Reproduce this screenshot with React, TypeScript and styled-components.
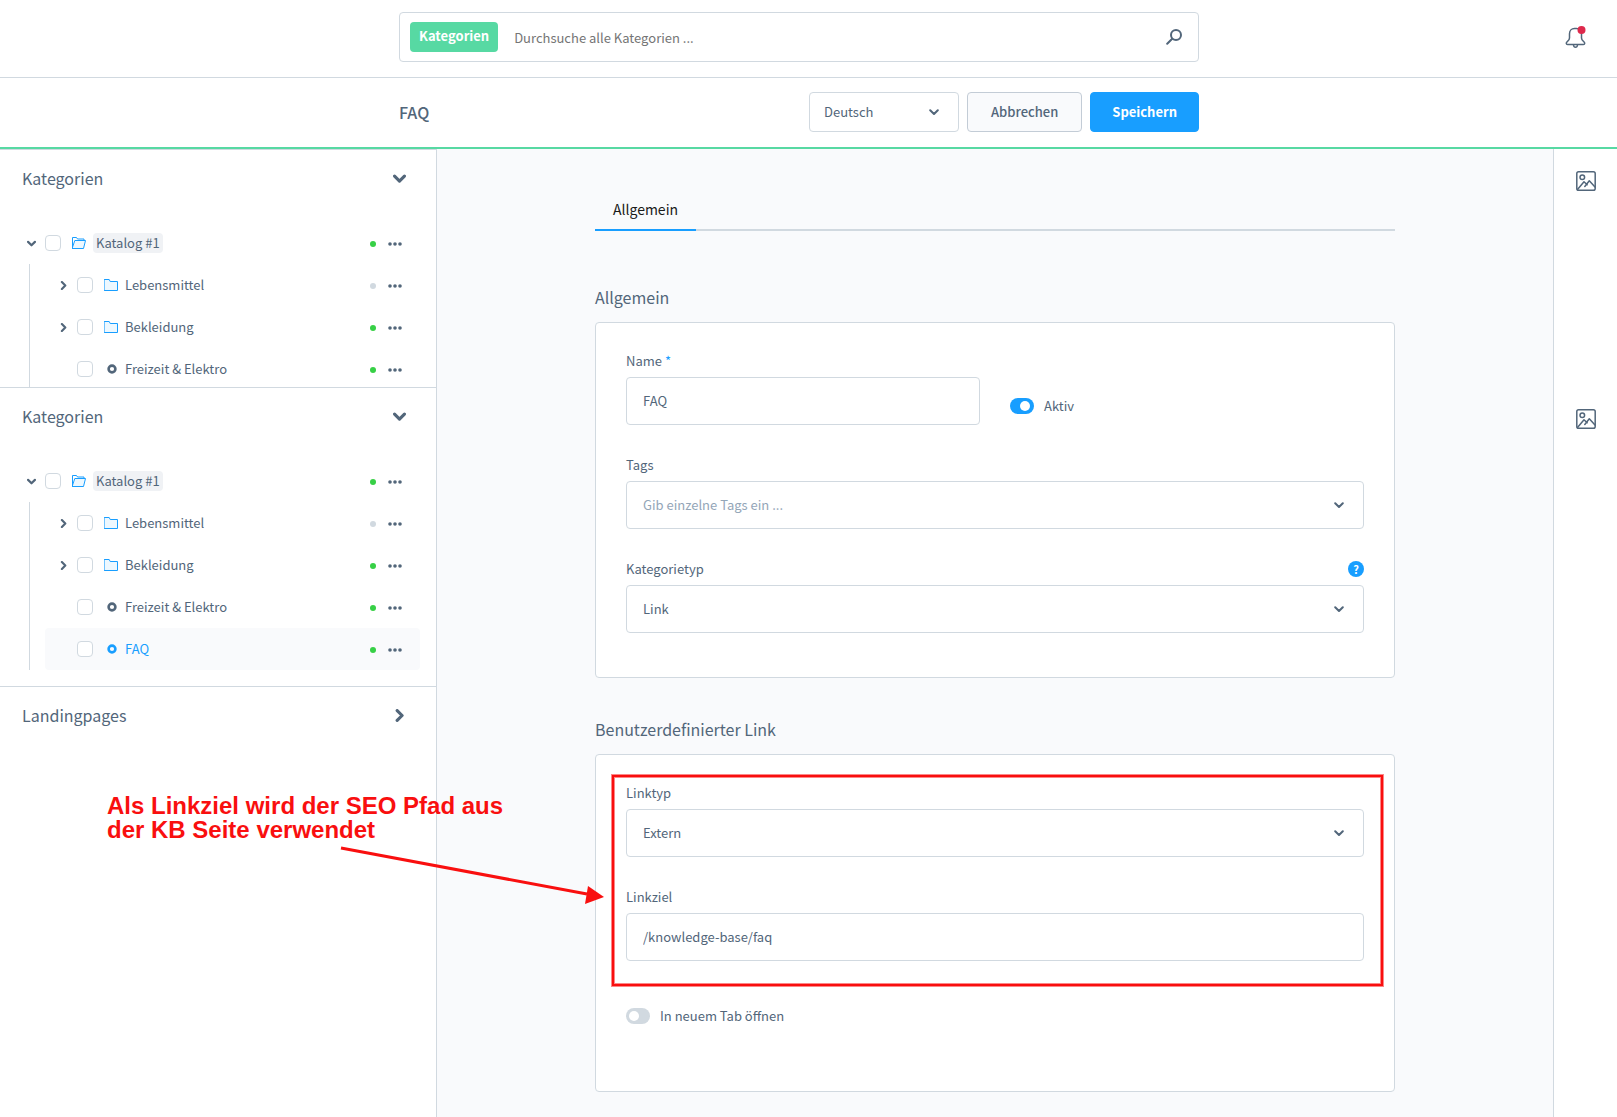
import React, { useId, useState } from "react";
import styled, { createGlobalStyle } from "styled-components";

const color = {
  text: "#52667a",
  line: "#d1d9e0",
  canvas: "#f9fafc",
  blue: "#189eff",
  green: "#57d9a3",
  active: "#37d046",
  alert: "#de294c",
  mark: "#f90f0f",
};

const GlobalStyle = createGlobalStyle`
  *, *::before, *::after { box-sizing: border-box; }
  body {
    margin: 0;
    background: #fff;
    color: ${color.text};
    font-family: "Noto Sans CJK SC", "Noto Sans", sans-serif;
    font-size: 13px;
    line-height: 16px;
  }
  button, input, select { font: inherit; color: inherit; }
  button { cursor: pointer; }
`;

/* ---------- Icons ---------- */

const Svg = styled.svg`
  display: block;
  flex: none;
  fill: none;
  stroke: currentColor;
  stroke-linecap: round;
  stroke-linejoin: round;
`;

type ChevronProps = { direction?: "down" | "right"; size?: number; weight?: number };

const Chevron = ({ direction = "down", size = 10, weight = 2 }: ChevronProps) => (
  <Svg width={size} height={size} viewBox="0 0 10 10" strokeWidth={weight} aria-hidden="true">
    <path d={direction === "down" ? "M1.2 3.2 5 7l3.8-3.8" : "M3.2 1.2 7 5 3.2 8.8"} />
  </Svg>
);

const SearchIcon = () => (
  <Svg width="16" height="16" viewBox="0 0 16 16" strokeWidth="2" aria-hidden="true">
    <circle cx="10" cy="6" r="5" />
    <path d="M6.2 9.8 1.2 14.8" />
  </Svg>
);

const BellIcon = () => (
  <Svg width="22" height="24" viewBox="0 0 22 24" strokeWidth="1.5" aria-hidden="true">
    <path d="M10.5 3.5h1c3 0 5 2.2 5 5.2v4.3c0 1.6.8 2.6 2.2 3.6 1.5 1.1 1.3 2.9-.3 2.9H2.600c-1.600 0-1.800-1.800-.3-2.900 1.400-1 2.200-2 2.200-3.600V8.700c0-3 2-5.200 5-5.200z" />
    <path d="M8.500 20c.2 1.700 1 2.200 2 2.200s1.800-.5 2-2.200" />
    <circle cx="16.500" cy="5" r="4" fill={color.alert} stroke="none" style={{ stroke: "none" }} />
  </Svg>
);

const PictureIcon = () => (
  <Svg width="20" height="20" viewBox="0 0 20 20" strokeWidth="1.5" aria-hidden="true">
    <rect x=".8" y=".8" width="18.4" height="18.4" rx="1.8" />
    <circle cx="6.3" cy="6.3" r="2.3" />
    <path d="M1.500 18.500 8 10.800l3.200 2.900M8.800 15.500l4.500-5.700 5.700 6.200" />
  </Svg>
);

const FolderIcon = () => (
  <Svg width="14" height="14" viewBox="0 0 14 14" color={color.blue} aria-hidden="true">
    <path fill="#edf8ff" strokeLinejoin="miter" d="M.5 1.500h4.700l1 2h7.300v9H.5z" />
  </Svg>
);

const OpenFolderIcon = () => (
  <Svg width="14" height="14" viewBox="0 0 14 14" color={color.blue} aria-hidden="true">
    <path strokeLinejoin="miter" d="M.5 12.500v-11h4l1 1.500h6.500v1.500" />
    <path fill="#edf8ff" strokeLinejoin="miter" d="M3.200 4.500h10.300l-2 8H.5z" />
  </Svg>
);

const RingIcon = () => (
  <Svg width="14" height="14" viewBox="0 0 14 14" strokeWidth="2.600" aria-hidden="true">
    <circle cx="8" cy="7" r="3.400" />
  </Svg>
);

const MoreIcon = () => (
  <Svg width="14" height="4" viewBox="0 0 14 4" aria-hidden="true">
    <g fill="currentColor" stroke="none">
      <circle cx="2" cy="2" r="1.800" />
      <circle cx="7" cy="2" r="1.800" />
      <circle cx="12" cy="2" r="1.800" />
    </g>
  </Svg>
);

/* ---------- Header and action bar ---------- */

const PlainButton = styled.button`
  display: flex;
  align-items: center;
  justify-content: center;
  padding: 0;
  border: 0;
  background: none;
`;

const TopGrid = styled.div`
  display: grid;
  grid-template-columns: minmax(0, 1fr) minmax(0, 800px) minmax(0, 1fr);
  align-items: center;
  padding-right: 19px;
`;

const Header = styled(TopGrid).attrs({ as: "header" })`
  height: 78px;
  padding-bottom: 3px;
  border-bottom: 1px solid ${color.line};
`;

const SearchBox = styled.form`
  grid-column: 2;
  display: flex;
  align-items: center;
  height: 50px;
  padding: 0 16px 0 10px;
  border: 1px solid ${color.line};
  border-radius: 4px;
`;

const SearchScope = styled.button`
  height: 30px;
  padding: 0 9px 2px;
  border: 0;
  border-radius: 4px;
  background: ${color.green};
  color: #fff;
  font-weight: 700;
`;

const SearchInput = styled.input`
  flex: 1;
  min-width: 0;
  padding: 2px 16px 0;
  border: 0;
  outline: 0;
  background: none;
  &::placeholder { color: #757575; opacity: 1; }
`;

const BellButton = styled(PlainButton)`
  justify-self: end;
  margin-right: 11px;
`;

const ActionBar = styled(TopGrid)`
  height: 71px;
  padding-bottom: 1px;
  border-bottom: 2px solid ${color.green};
`;

const ActionContent = styled.div`
  grid-column: 2;
  display: flex;
  align-items: center;
  gap: 8px;
`;

const PageTitle = styled.h1`
  flex: 1;
  margin: 0;
  font-size: 16px;
  line-height: 24px;
  font-weight: 500;
`;

const Button = styled.button<{ $primary?: boolean }>`
  height: 40px;
  padding: 0 ${(p) => (p.$primary ? "21px" : "23px")};
  border: 1px solid ${(p) => (p.$primary ? color.blue : "#c3ccd6")};
  border-radius: 4px;
  background: ${(p) => (p.$primary ? color.blue : color.canvas)};
  color: ${(p) => (p.$primary ? "#fff" : color.text)};
  font-weight: ${(p) => (p.$primary ? 700 : 500)};
`;

/* ---------- Form controls ---------- */

const Control = styled.div<{ $compact?: boolean }>`
  display: grid;
  align-items: center;
  width: ${(p) => (p.$compact ? "150px" : "100%")};
  height: ${(p) => (p.$compact ? "40px" : "48px")};

  > * { grid-area: 1 / 1; }
  > svg { justify-self: end; margin-right: 20px; pointer-events: none; }
  > input, > select {
    width: 100%;
    height: 100%;
    padding: 0 ${(p) => (p.$compact ? "14px" : "16px")};
    border: 1px solid ${color.line};
    border-radius: 4px;
    background: #fff;
    appearance: none;
    outline: 0;
  }
  > input { padding-bottom: 2px; }
  > input::placeholder { color: #94a6b8; opacity: 1; }
`;

const FieldBox = styled.div`
  display: flex;
  flex-direction: column;
  gap: 8px;
`;

const FieldHead = styled.div`
  display: flex;
  align-items: center;
  justify-content: space-between;
  height: 16px;
`;

const Required = styled.span`
  color: ${color.blue};
`;

const HelpButton = styled.button`
  width: 16px;
  height: 16px;
  padding: 0;
  border: 0;
  border-radius: 50%;
  background: ${color.blue};
  color: #fff;
  font-size: 11px;
  line-height: 16px;
  font-weight: 700;
`;

type FieldProps = {
  label: string;
  value?: string;
  placeholder?: string;
  required?: boolean;
  help?: boolean;
  options?: string[];
  dropdown?: boolean;
};

const Field = ({ label, value = "", placeholder, required, help, options, dropdown }: FieldProps) => {
  const id = useId();
  return (
    <FieldBox>
      <FieldHead>
        <label htmlFor={id}>
          {label}
          {required && <Required> *</Required>}
        </label>
        {help && <HelpButton type="button" aria-label="Hilfe">?</HelpButton>}
      </FieldHead>
      <Control>
        {options ? (
          <select id={id} defaultValue={value}>
            {options.map((option) => (
              <option key={option}>{option}</option>
            ))}
          </select>
        ) : (
          <input id={id} type="text" defaultValue={value} placeholder={placeholder} required={required} />
        )}
        {(options || dropdown) && <Chevron />}
      </Control>
    </FieldBox>
  );
};

const SwitchLabel = styled.label`
  display: flex;
  align-items: center;
  gap: 10px;
  padding: 15px 0 11px;
`;

const SwitchInput = styled.input`
  flex: none;
  display: flex;
  align-items: center;
  width: 24px;
  height: 16px;
  margin: 0;
  padding: 0 3px;
  border-radius: 8px;
  background: ${color.line};
  appearance: none;

  &::before {
    content: "";
    width: 10px;
    height: 10px;
    border-radius: 50%;
    background: #fff;
  }
  &:checked { justify-content: flex-end; padding-right: 4px; background: ${color.blue}; }
`;

const Switch = ({ label, on }: { label: string; on?: boolean }) => (
  <SwitchLabel>
    <SwitchInput type="checkbox" role="switch" defaultChecked={on} />
    {label}
  </SwitchLabel>
);

/* ---------- Category sidebar ---------- */

const Sidebar = styled.aside`
  border: solid ${color.line};
  border-width: 1px 1px 0 0;
`;

const Panel = styled.section`
  border-bottom: 1px solid ${color.line};
  &:last-child { border-bottom: 0; }
`;

const PanelToggle = styled.button`
  display: flex;
  align-items: center;
  justify-content: space-between;
  width: 100%;
  height: 60px;
  padding: 0 30px 4px 22px;
  border: 0;
  background: none;
`;

const PanelTitle = styled.span`
  font-size: 16px;
  line-height: 24px;
`;

const Tree = styled.div<{ $clipped?: boolean }>`
  max-height: ${(p) => (p.$clipped ? "177px" : "none")};
  overflow: hidden;
  padding: 12px 16px 16px 17px;
`;

const Branch = styled.ul`
  margin: 0 0 0 12px;
  padding: 0 0 0 15px;
  border-left: 1px solid ${color.line};
  list-style: none;
`;

const TreeRow = styled.div<{ $nested?: boolean; $selected?: boolean }>`
  display: flex;
  align-items: center;
  height: 42px;
  padding: 0 18px 0 ${(p) => (p.$nested ? "4px" : "0")};
  border-radius: 4px;
  background: ${(p) => (p.$selected ? color.canvas : "transparent")};
`;

const Expander = styled(PlainButton)`
  width: 28px;
  height: 28px;
`;

const ExpanderGap = styled.span`
  width: 28px;
`;

const Checkbox = styled.input`
  flex: none;
  width: 16px;
  height: 16px;
  margin: 0 11px 0 0;
  border: 1px solid ${color.line};
  border-radius: 4px;
  background: #fff;
  appearance: none;
  &:checked { border-color: ${color.blue}; background: ${color.blue}; }
`;

const NodeLink = styled.a<{ $root?: boolean; $selected?: boolean }>`
  display: flex;
  align-items: center;
  gap: 7px;
  color: ${(p) => (p.$selected ? color.blue : "inherit")};
  text-decoration: none;

  > span {
    padding: 0 ${(p) => (p.$root ? "3px" : "0")};
    border-radius: 4px;
    background: ${(p) => (p.$root ? "#f0f2f5" : "transparent")};
    line-height: 20px;
  }
`;

const RowEnd = styled.div`
  display: flex;
  align-items: center;
  gap: 12px;
  margin-left: auto;
  padding-top: 2px;
`;

const Status = styled.span<{ $on: boolean }>`
  width: 6px;
  height: 6px;
  border-radius: 50%;
  background: ${(p) => (p.$on ? color.active : color.line)};
`;

type Node = { name: string; kind: "root" | "folder" | "leaf"; active: boolean; selected?: boolean };

const TreeItem = ({ node }: { node: Node }) => {
  const root = node.kind === "root";
  return (
    <TreeRow $nested={!root} $selected={node.selected}>
      {node.kind === "leaf" ? (
        <ExpanderGap />
      ) : (
        <Expander type="button" aria-expanded={root} aria-label={node.name + " aufklappen"}>
          <Chevron direction={root ? "down" : "right"} size={9} weight={2.4} />
        </Expander>
      )}
      <Checkbox type="checkbox" aria-label={node.name} />
      <NodeLink href="#" $root={root} $selected={node.selected}>
        {root ? <OpenFolderIcon /> : node.kind === "folder" ? <FolderIcon /> : <RingIcon />}
        <span>{node.name}</span>
      </NodeLink>
      <RowEnd>
        <Status $on={node.active} />
        <PlainButton type="button" aria-label="Aktionen">
          <MoreIcon />
        </PlainButton>
      </RowEnd>
    </TreeRow>
  );
};

const rootNode: Node = { name: "Katalog #1", kind: "root", active: true };
const baseNodes: Node[] = [
  { name: "Lebensmittel", kind: "folder", active: false },
  { name: "Bekleidung", kind: "folder", active: true },
  { name: "Freizeit & Elektro", kind: "leaf", active: true },
];
const faqNode: Node = { name: "FAQ", kind: "leaf", active: true, selected: true };

type TreePanelProps = { title: string; nodes?: Node[]; clipped?: boolean };

const TreePanel = ({ title, nodes, clipped }: TreePanelProps) => {
  const [open, setOpen] = useState(Boolean(nodes));
  return (
    <Panel>
      <PanelToggle type="button" aria-expanded={open} onClick={() => setOpen(!open)}>
        <PanelTitle>{title}</PanelTitle>
        <Chevron direction={open ? "down" : "right"} size={13} weight={2.4} />
      </PanelToggle>
      {open && nodes && (
        <Tree $clipped={clipped}>
          <TreeItem node={rootNode} />
          <Branch>
            {nodes.map((node) => (
              <li key={node.name}>
                <TreeItem node={node} />
              </li>
            ))}
          </Branch>
        </Tree>
      )}
    </Panel>
  );
};

/* ---------- Detail view ---------- */

const Workspace = styled.div`
  position: relative;
  display: grid;
  grid-template-columns: 437px minmax(0, 1fr) 64px;
  min-height: calc(100vh - 149px);
`;

const Main = styled.main`
  padding: 42px 24px 24px;
  background: ${color.canvas};
`;

const Content = styled.div`
  max-width: 800px;
  margin: 0 auto;
`;

const Tabs = styled.nav`
  display: flex;
  margin-bottom: 54px;
  box-shadow: inset 0 -2px ${color.line};
`;

const Tab = styled.a`
  height: 40px;
  padding: 6px 18px 0;
  border-bottom: 2px solid ${color.blue};
  color: #1a1a1a;
  font-size: 14px;
  line-height: 24px;
  text-decoration: none;
`;

const CardTitle = styled.h2`
  margin: 0 0 13px;
  font-size: 16px;
  line-height: 24px;
  font-weight: 400;
`;

const Card = styled.section<{ $bottom: number }>`
  display: flex;
  flex-direction: column;
  gap: 32px;
  margin-bottom: 39px;
  padding: 30px 30px ${(p) => p.$bottom}px;
  border: 1px solid ${color.line};
  border-radius: 4px;
  background: #fff;
  &:last-child { margin-bottom: 0; }
`;

const Columns = styled.div`
  display: grid;
  grid-template-columns: 1fr 1fr;
  align-items: end;
  gap: 30px;
`;

const MarkedFields = styled.div`
  position: relative;
  display: flex;
  flex-direction: column;
  gap: 32px;

  &::after {
    content: "";
    position: absolute;
    inset: -10px -19px -25px -14px;
    border: 2px solid ${color.mark};
    box-shadow: 0 0 0 1px #fa0f0f80, inset 0 0 0 1px #fa0f0f80;
    pointer-events: none;
  }
`;

const MediaBar = styled.aside`
  border-left: 1px solid ${color.line};
`;

const MediaSlot = styled.div`
  display: flex;
  align-items: flex-start;
  justify-content: center;
  height: 238px;
  padding: 22px 0 0 1px;
`;

/* ---------- Annotation drawn over the page ---------- */

const Note = styled.p`
  position: absolute;
  left: 107px;
  top: 645px;
  margin: 0;
  color: ${color.mark};
  font: 700 24px/24px "Liberation Sans", Arial, sans-serif;
  pointer-events: none;
`;

const Arrow = styled.svg`
  position: absolute;
  left: 340px;
  top: 695px;
  pointer-events: none;
`;

export default function App() {
  return (
    <>
      <GlobalStyle />
      <Header>
        <SearchBox role="search" onSubmit={(event) => event.preventDefault()}>
          <SearchScope type="button">Kategorien</SearchScope>
          <SearchInput type="search" aria-label="Suche" placeholder="Durchsuche alle Kategorien ..." />
          <PlainButton type="submit" aria-label="Suchen">
            <SearchIcon />
          </PlainButton>
        </SearchBox>
        <BellButton type="button" aria-label="Benachrichtigungen">
          <BellIcon />
        </BellButton>
      </Header>

      <ActionBar>
        <ActionContent>
          <PageTitle>FAQ</PageTitle>
          <Control $compact>
            <select aria-label="Sprache" defaultValue="Deutsch">
              <option>Deutsch</option>
              <option>English</option>
            </select>
            <Chevron />
          </Control>
          <Button type="button">Abbrechen</Button>
          <Button type="button" $primary>Speichern</Button>
        </ActionContent>
      </ActionBar>

      <Workspace>
        <Sidebar>
          <TreePanel title="Kategorien" nodes={baseNodes} clipped />
          <TreePanel title="Kategorien" nodes={[...baseNodes, faqNode]} />
          <TreePanel title="Landingpages" />
        </Sidebar>

        <Main>
          <Content>
            <Tabs>
              <Tab href="#" aria-current="page">Allgemein</Tab>
            </Tabs>

            <CardTitle>Allgemein</CardTitle>
            <Card $bottom={44}>
              <Columns>
                <Field label="Name" value="FAQ" required />
                <Switch label="Aktiv" on />
              </Columns>
              <Field label="Tags" placeholder="Gib einzelne Tags ein ..." dropdown />
              <Field label="Kategorietyp" value="Link" options={["Link", "Seite / Liste"]} help />
            </Card>

            <CardTitle>Benutzerdefinierter Link</CardTitle>
            <Card $bottom={56}>
              <MarkedFields>
                <Field label="Linktyp" value="Extern" options={["Extern", "Intern"]} />
                <Field label="Linkziel" value="/knowledge-base/faq" />
              </MarkedFields>
              <Switch label="In neuem Tab öffnen" />
            </Card>
          </Content>
        </Main>

        <MediaBar>
          <MediaSlot>
            <PlainButton type="button" aria-label="Medien">
              <PictureIcon />
            </PlainButton>
          </MediaSlot>
          <MediaSlot>
            <PlainButton type="button" aria-label="Medien">
              <PictureIcon />
            </PlainButton>
          </MediaSlot>
        </MediaBar>

        <Note>
          Als Linkziel wird der SEO Pfad aus
          <br />
          der KB Seite verwendet
        </Note>
        <Arrow width="266" height="64" viewBox="0 0 266 64" aria-hidden="true">
          <path d="M1 4 247 50" stroke={color.mark} strokeWidth="3" />
          <path d="M248 42 264 53 245 60z" fill={color.mark} />
        </Arrow>
      </Workspace>
    </>
  );
}
